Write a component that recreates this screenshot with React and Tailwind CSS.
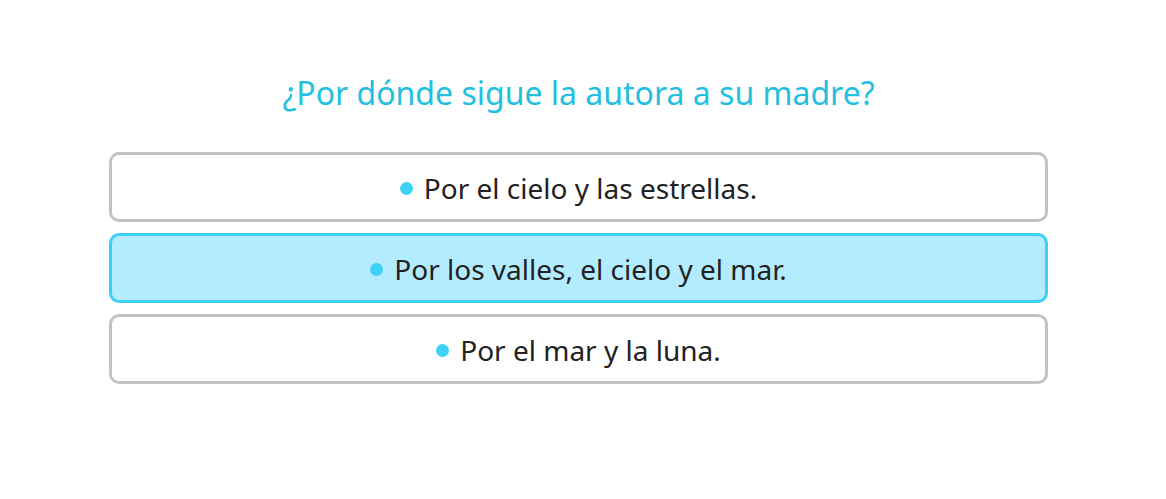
import React from "react";

const options = [
  { text: "Por el cielo y las estrellas.", selected: false },
  { text: "Por los valles, el cielo y el mar.", selected: true },
  { text: "Por el mar y la luna.", selected: false },
];

export default function App() {
  return (
    <div
      className="w-[1166px] h-[499px] bg-white pl-[109px] pt-[71px]"
      style={{ fontFamily: '"Noto Sans", "Open Sans", sans-serif' }}
    >
      <div className="w-[939px]">
        <h2 className="text-center text-[32px] leading-[44px] text-[#22bfe0]">
          ¿Por dónde sigue la autora a su madre?
        </h2>

        <div className="mt-[37px] flex flex-col gap-[11px]">
          {options.map((opt) => (
            <div
              key={opt.text}
              className={
                opt.selected
                  ? "h-[70px] pt-[2px] rounded-[10px] border-[3px] border-[#3dd2f5] bg-[#b3ecff] flex items-center justify-center"
                  : "h-[70px] pt-[2px] rounded-[10px] border-[3px] border-[#c2c2c2] bg-white flex items-center justify-center"
              }
            >
              <span className="w-[13px] h-[13px] rounded-full bg-[#3dd2f5] mr-[11px]" />
              <span className="text-[28px] leading-[36px] text-[#222222]">{opt.text}</span>
            </div>
          ))}
        </div>
      </div>
    </div>
  );
}
